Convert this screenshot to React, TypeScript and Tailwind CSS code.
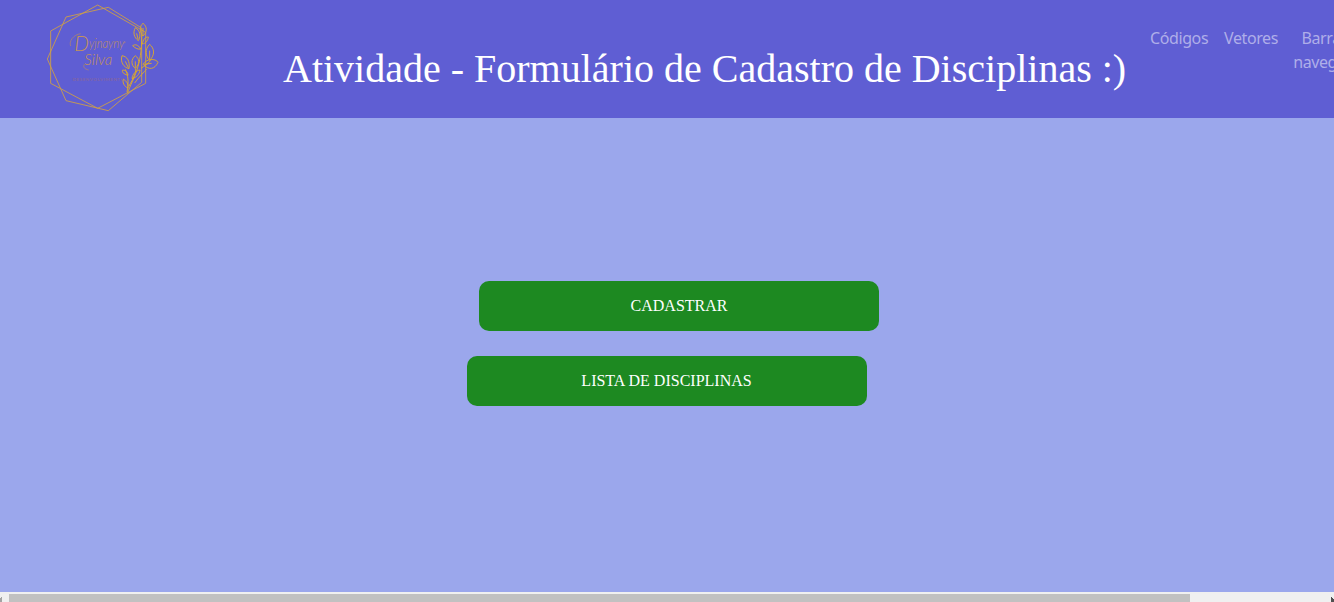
import React from 'react';

function Logo() {
  return (
    <svg viewBox="0 0 375 354" className="block h-[118px] w-[125px] shrink-0" fill="none" stroke="#cfa044" strokeWidth="2.6">
      <path d="M173 15 L317 97 V250 L173 325 L32 250 V93Z" />
      <path d="M205 22 L78 51 L22 177 L78 302 L205 332 L305 247 V84Z" />
      <g fill="#c3925a" fontFamily="'Lato', sans-serif" fontStyle="italic" fontWeight="300" stroke="none">
        <text x="103" y="152" fontSize="66" textLength="44" lengthAdjust="spacingAndGlyphs">D</text>
        <text x="147" y="145" fontSize="42" textLength="106" lengthAdjust="spacingAndGlyphs">yjnayny</text>
        <text x="133" y="195" fontSize="46" textLength="84" lengthAdjust="spacingAndGlyphs">Silva</text>
      </g>
      <path stroke="#b88a62" strokeWidth="2" d="M92 138 C86 124 100 104 122 101 M133 193 C128 202 134 207 146 210 M250 130 L257 126" />
      <text x="98" y="243" fill="#8265a3" stroke="none" fontFamily="'Lato', sans-serif" fontSize="13" fontWeight="700" textLength="154">DESENVOLVIMENTO</text>
      <path
        stroke="#dca82c"
        strokeWidth="2.8"
        d="M262 280 C280 232 306 200 305 107 M261 276 C267 245 264 225 256 208 M267 258 C280 235 288 220 287 205 M284 249 C302 225 311 218 320 207 M303 205 C315 197 326 190 332 181
        M309 70 C298 78 298 98 309 108 C322 98 322 79 309 70Z M309 84 V106
        M286 83 C278 98 282 112 295 122 C304 106 300 92 286 83Z M290 100 L294 117
        M329 133 C314 147 316 169 329 181 C345 166 344 145 329 133Z M329 152 L329 178
        M309 193 C318 176 347 174 354 187 C344 209 326 211 309 193Z M312 193 L335 190
        M246 167 C240 186 251 202 267 206 C270 183 262 170 246 167Z M256 184 L265 203
        M286 167 C272 178 273 196 286 205 C300 192 299 176 286 167Z M286 184 V203
        M302 147 C294 132 284 133 278 137 C286 145 294 149 302 147Z M307 132 C309 119 316 110 325 111 C323 124 317 130 307 132Z
        M264 226 C250 222 245 216 248 210 C258 210 264 217 264 226Z M276 236 C278 220 288 212 300 210 C298 224 290 232 276 236Z M264 265 C252 258 247 248 250 238 C260 243 266 252 264 265Z"
      />
    </svg>
  );
}

export default function App() {
  return (
    <div className="flex h-[602px] w-full flex-col overflow-hidden bg-[#9ba7ec]">
      <header className="flex h-[118px] shrink-0 overflow-hidden bg-[#5f5ed3] pl-10">
        <Logo />
        <h1 className="ml-[118px] w-[843px] shrink-0 whitespace-nowrap pt-[39px] font-['Liberation_Serif',serif] text-[40px] leading-[60px] text-white">
          Atividade - Formulário de Cadastro de Disciplinas :)
        </h1>
        <nav className="ml-6 flex shrink-0 pt-[26px] font-['Noto_Sans',sans-serif] text-base leading-6 tracking-[-0.4px] text-[#afaee9]">
          <a className="w-[74px]">Códigos</a>
          <a className="w-[65px]">Vetores</a>
          <a className="w-[86px] text-center">Barra de navegação</a>
        </nav>
      </header>
      <main className="flex flex-1 flex-col items-center gap-[25px] pt-[163px] font-['Liberation_Serif',serif] text-base text-white">
        <button className="ml-6 h-[50px] w-[400px] rounded-[10px] bg-[#1d8921]">CADASTRAR</button>
        <button className="h-[50px] w-[400px] rounded-[10px] bg-[#1d8921] pr-px">LISTA DE DISCIPLINAS</button>
      </main>
      <div className="flex h-[10px] shrink-0 items-end justify-between bg-[#f0f0f0]">
        <svg className="h-2 w-[9px]" viewBox="0 0 9 8" fill="#a3a3a3"><path d="M0 4h1V3h1v5H0Z" /></svg>
        <div className="h-2 w-[1181px] bg-[#c1c1c1]" />
        <div className="flex-1" />
        <svg className="h-2 w-[4px]" viewBox="0 0 4 8" fill="#505050"><path d="M1 3h1v1h1v1h1v3H1Z" /></svg>
      </div>
    </div>
  );
}
